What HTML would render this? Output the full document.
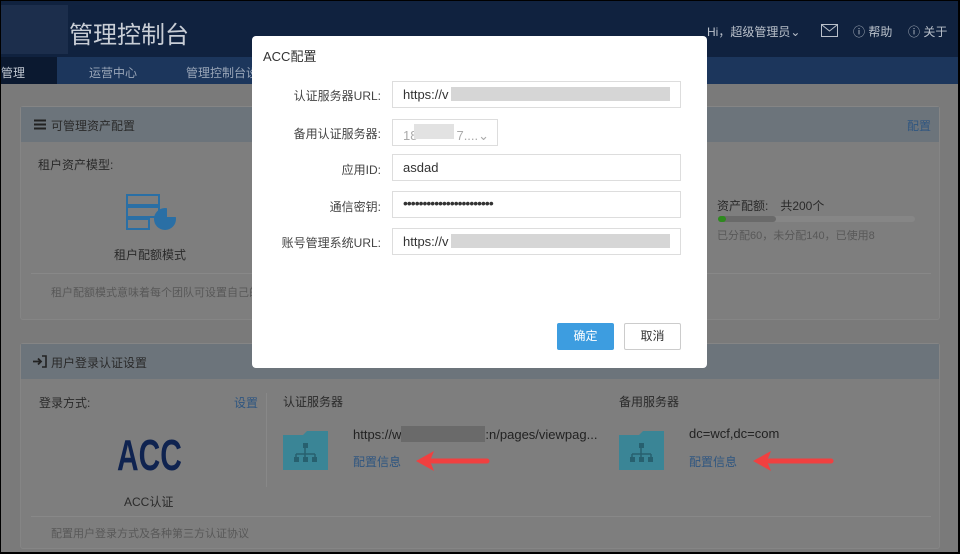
<!DOCTYPE html>
<html><head><meta charset="utf-8"><style>
*{margin:0;padding:0;box-sizing:border-box}
body{width:960px;height:554px;overflow:hidden;background:#000;font-family:"Liberation Sans","Noto Sans CJK SC",sans-serif;font-size:12px;position:relative}
.a{position:absolute;white-space:nowrap}
#page{position:absolute;left:1px;top:1px;width:957px;height:551px;background:#7a7a7a;overflow:hidden}
.hdr{left:0;top:0;width:957px;height:56px;background:#10223f}
.nav{left:0;top:56px;width:957px;height:27px;background:#1c365c}
.panel{background:#7e7e7e;border:1px solid #858585;border-radius:3px}
.ph{background:#6c747b}
.t{color:#2a2a2a}
.lk{color:#2f5680}
.m{color:#585858}
.modal{left:251px;top:35px;width:455px;height:332px;background:#fff;border-radius:4px}
.lab{color:#444;font-size:12px;text-align:right;width:130px}
.inp{border:1px solid #ddd;background:#fff;height:27px;font-size:13px;color:#333;padding:5px 10px}
.blur{background:#d6d6d6}
</style></head><body><div id="page">
<div class="a hdr"></div>
<div class="a" style="left:0;top:4px;width:67px;height:49px;background:#1c2e4c"></div>
<div class="a" style="left:68px;top:14px;font-size:24px;color:#c9ced6">管理控制台</div>
<div class="a nav"></div>
<div class="a" style="left:0;top:56px;width:56px;height:27px;background:#0b1930"></div>
<div class="a" style="left:0;top:63px;color:#bfc6d0;font-size:12px">管理</div>
<div class="a" style="left:88px;top:63px;color:#9aa6b8">运营中心</div>
<div class="a" style="left:185px;top:63px;color:#9aa6b8">管理控制台设</div>
<div class="a" style="left:706px;top:22px;color:#b9c0ca">Hi，超级管理员⌄</div>
<svg class="a" style="left:820px;top:23px" width="17" height="13"><rect x="0.5" y="0.5" width="16" height="12" fill="none" stroke="#b9c0ca"/><path d="M1 1 L8.5 7 L16 1" fill="none" stroke="#b9c0ca"/></svg>
<div class="a" style="left:852px;top:22px;color:#b9c0ca">ⓘ 帮助</div>
<div class="a" style="left:907px;top:22px;color:#b9c0ca">ⓘ 关于</div>

<div class="a panel" style="left:19px;top:105px;width:920px;height:214px"></div>
<div class="a ph" style="left:20px;top:106px;width:918px;height:35px"></div>
<svg class="a" style="left:33px;top:118px" width="12" height="11"><path d="M0 1.5H12M0 5.5H12M0 9.5H12" stroke="#222" stroke-width="2"/></svg>
<div class="a t" style="left:50px;top:116px">可管理资产配置</div>
<div class="a lk" style="left:906px;top:116px">配置</div>
<div class="a t" style="left:37px;top:155px">租户资产模型:</div>
<svg class="a" style="left:125px;top:193px" width="52" height="38"><g fill="none" stroke="#2a6fa5" stroke-width="2"><rect x="1" y="1" width="32" height="10"/><rect x="1" y="13" width="32" height="10"/><rect x="1" y="25" width="22" height="10"/></g><circle cx="39" cy="25" r="11" fill="#2a6fa5"/><path d="M41 23V12A11 11 0 0 1 52 23Z" fill="#7e7e7e"/></svg>
<div class="a t" style="left:113px;top:245px">租户配额模式</div>
<div class="a" style="left:30px;top:272px;width:900px;height:1px;background:#888"></div>
<div class="a m" style="left:50px;top:283px;font-size:11px">租户配额模式意味着每个团队可设置自己的</div>
<div class="a t" style="left:716px;top:196px">资产配额:　共200个</div>
<div class="a" style="left:717px;top:215px;width:197px;height:6px;background:#868686;border-radius:3px"></div>
<div class="a" style="left:717px;top:215px;width:58px;height:6px;background:#6a6a6a;border-radius:3px"></div>
<div class="a" style="left:717px;top:215px;width:8px;height:6px;background:#2e8a1e;border-radius:3px"></div>
<div class="a m" style="left:716px;top:226px;font-size:11px">已分配60，未分配140，已使用8</div>

<div class="a panel" style="left:19px;top:342px;width:920px;height:206px"></div>
<div class="a ph" style="left:20px;top:343px;width:918px;height:35px"></div>
<svg class="a" style="left:32px;top:354px" width="14" height="13"><path d="M0 6.5H8M5 3.5L8 6.5L5 9.5" fill="none" stroke="#222" stroke-width="1.8"/><path d="M9 1H13V12H9" fill="none" stroke="#222" stroke-width="1.6"/></svg>
<div class="a t" style="left:50px;top:353px">用户登录认证设置</div>
<div class="a t" style="left:38px;top:393px">登录方式:</div>
<div class="a lk" style="left:233px;top:393px">设置</div>
<div class="a" style="left:265px;top:392px;width:1px;height:94px;background:#888"></div>
<div class="a" style="left:116px;top:430px;font-size:44px;font-weight:bold;color:#0f2350;transform:scaleX(0.68);transform-origin:left;font-family:'Liberation Sans',sans-serif">ACC</div>
<div class="a t" style="left:123px;top:492px">ACC认证</div>
<div class="a t" style="left:282px;top:392px">认证服务器</div>
<div class="a t" style="left:618px;top:392px">备用服务器</div>
<svg class="a" style="left:282px;top:430px" width="46" height="39"><path d="M0 4H20L24 0H45V39H0Z" fill="#3a8596"/><g fill="#27606f"><rect x="20" y="12" width="5" height="5"/><rect x="11" y="26" width="5" height="5"/><rect x="20" y="26" width="5" height="5"/><rect x="29" y="26" width="5" height="5"/><path d="M22 17V26M13 23H32M13 23V26M32 23V26" stroke="#27606f" stroke-width="1.5"/></g></svg>
<svg class="a" style="left:618px;top:430px" width="46" height="39"><path d="M0 4H20L24 0H45V39H0Z" fill="#3a8596"/><g fill="#27606f"><rect x="20" y="12" width="5" height="5"/><rect x="11" y="26" width="5" height="5"/><rect x="20" y="26" width="5" height="5"/><rect x="29" y="26" width="5" height="5"/><path d="M22 17V26M13 23H32M13 23V26M32 23V26" stroke="#27606f" stroke-width="1.5"/></g></svg>
<div class="a" style="left:352px;top:425px;font-size:13px;color:#222">https://w<span style="display:inline-block;width:84px;height:16px;background:#6a6a6a;vertical-align:-3px"></span>:n/pages/viewpag...</div>
<div class="a lk" style="left:352px;top:452px">配置信息</div>
<div class="a" style="left:688px;top:425px;font-size:13px;color:#222">dc=wcf,dc=com</div>
<div class="a lk" style="left:688px;top:452px">配置信息</div>
<svg class="a" style="left:413px;top:449px" width="76" height="22"><path d="M18 11H73" stroke="#f04040" stroke-width="5" stroke-linecap="round"/><path d="M2 11L20 1L16 11L20 21Z" fill="#f04040"/></svg>
<svg class="a" style="left:750px;top:449px" width="84" height="22"><path d="M18 11H80" stroke="#f04040" stroke-width="5" stroke-linecap="round"/><path d="M2 11L20 1L16 11L20 21Z" fill="#f04040"/></svg>
<div class="a" style="left:30px;top:515px;width:900px;height:1px;background:#888"></div>
<div class="a m" style="left:50px;top:524px;font-size:11px">配置用户登录方式及各种第三方认证协议</div>

<div class="a modal"></div>
<div class="a" style="left:262px;top:45px;font-size:13px;color:#333">ACC配置</div>
<div class="a lab" style="left:250px;top:86px">认证服务器URL:</div>
<div class="a inp" style="left:391px;top:80px;width:289px">https://v</div>
<div class="a blur" style="left:450px;top:86px;width:219px;height:14px"></div>
<div class="a lab" style="left:250px;top:124px">备用认证服务器:</div>
<div class="a inp" style="left:391px;top:118px;width:106px;color:#aaa">18　　　7....⌄</div>
<div class="a blur" style="left:413px;top:123px;width:40px;height:15px;background:#e2e2e2"></div>
<div class="a lab" style="left:250px;top:160px">应用ID:</div>
<div class="a inp" style="left:391px;top:153px;width:289px">asdad</div>
<div class="a lab" style="left:250px;top:197px">通信密钥:</div>
<div class="a inp" style="left:391px;top:190px;width:289px;font-size:14px;padding-top:3px;letter-spacing:-1px">•••••••••••••••••••••••</div>
<div class="a lab" style="left:250px;top:233px">账号管理系统URL:</div>
<div class="a inp" style="left:391px;top:227px;width:289px">https://v</div>
<div class="a blur" style="left:450px;top:233px;width:219px;height:14px"></div>
<div class="a" style="left:556px;top:322px;width:57px;height:27px;background:#3d9de0;border-radius:2px;color:#fff;text-align:center;line-height:27px">确定</div>
<div class="a" style="left:623px;top:322px;width:57px;height:27px;background:#fff;border:1px solid #ccc;border-radius:2px;color:#333;text-align:center;line-height:25px">取消</div>
</div></body></html>
